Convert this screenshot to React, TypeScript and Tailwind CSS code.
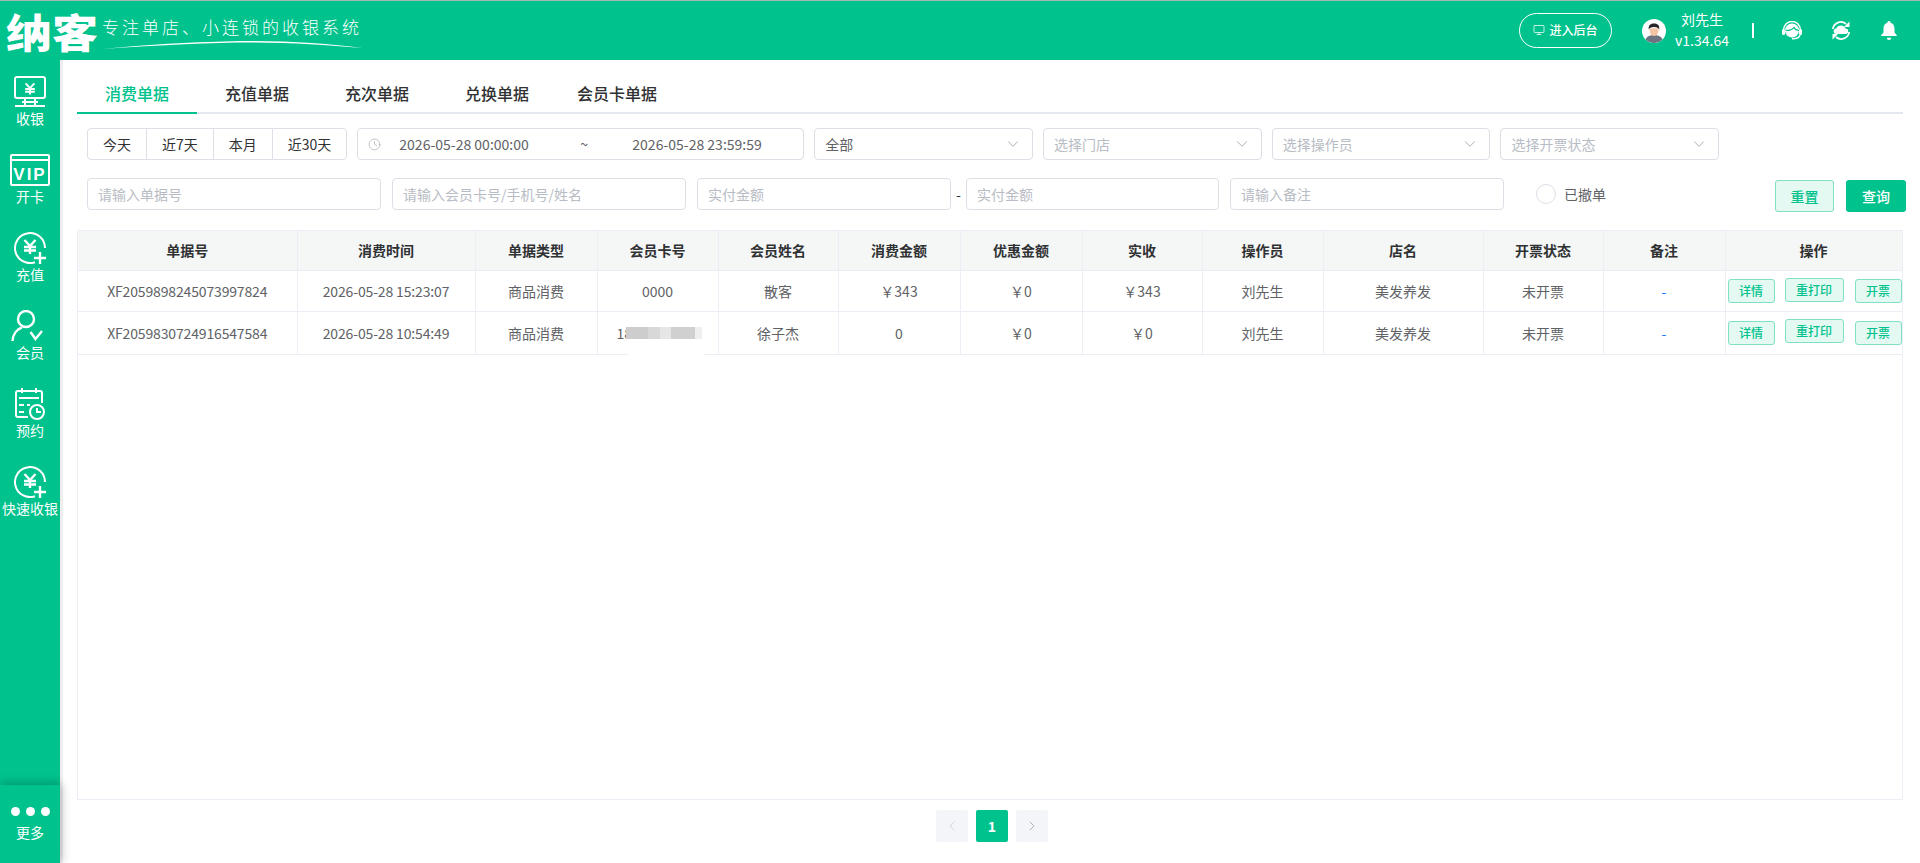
import { ChevronDown, ChevronLeft, ChevronRight, Clock, Monitor } from "lucide-react";

const font = "font-['Noto_Sans_CJK_SC','Noto_Sans',sans-serif]";

function YenMark({ x, y, s = 1 }: { x: number; y: number; s?: number }) {
  return (
    <path
      transform={`translate(${x} ${y}) scale(${s})`}
      d="M-5.500 -7L0 -1L5.500 -7M0 -1V7M-6 0H6M-6 3.500H6"
      fill="none"
      stroke="white"
      strokeWidth="2.400"
    />
  );
}

function CashIcon() {
  return (
    <svg width="60" height="32" viewBox="0 0 60 32" fill="none" stroke="white" strokeWidth="2">
      <rect x="15" y="1" width="30" height="21" rx="2" />
      <path d="M25 22v7M35 22v7M22 26h16M15 30h30" />
      <YenMark x={30} y={13} s={0.8} />
    </svg>
  );
}

function VipIcon() {
  return (
    <svg width="60" height="32" viewBox="0 0 60 32" fill="none" stroke="white" strokeWidth="2">
      <rect x="11" y="1" width="38" height="30" rx="1" />
      <path d="M11 6h38" />
      <text
        x="30"
        y="26"
        textAnchor="middle"
        fill="white"
        stroke="none"
        fontFamily="Liberation Sans"
        fontWeight="700"
        fontSize="17"
        letterSpacing="2"
      >
        VIP
      </text>
    </svg>
  );
}

function TopUpIcon() {
  return (
    <svg width="60" height="32" viewBox="0 0 60 32" fill="none" stroke="white" strokeWidth="2">
      <path d="M35 30.200A15 15 0 1 1 45 16" />
      <YenMark x={30} y={15} />
      <path d="M40 20v12M34 26h12" strokeWidth="2.400" />
    </svg>
  );
}

function MemberIcon() {
  return (
    <svg width="60" height="32" viewBox="0 0 60 32" fill="none" stroke="white" strokeWidth="2.400">
      <circle cx="26" cy="9" r="8" />
      <path d="M12.500 31C13 24 17 19 22 17.500M30.500 22l5 7l6.500 -8" />
    </svg>
  );
}

function BookingIcon() {
  return (
    <svg width="60" height="32" viewBox="0 0 60 32" fill="none" stroke="white" strokeWidth="2">
      <path d="M28 29H18a2 2 0 0 1 -2 -2V5a2 2 0 0 1 2 -2h22a2 2 0 0 1 2 2v10" />
      <path d="M22 0v5M36 0v5M19 10h20M19 17h5M19 24h5M27 17h3" />
      <circle cx="37" cy="24" r="7" />
      <path d="M37 20v4h4" />
    </svg>
  );
}

function SupportIcon() {
  return (
    <svg width="20" height="19" viewBox="0 0 20 19">
      <path d="M1.500 11V9a8.500 8.500 0 0 1 17 0v2" fill="none" stroke="white" strokeWidth="1.500" />
      <circle cx="10" cy="9.500" r="7" fill="white" />
      <path d="M3.500 9C6 10 10 9 12 6.500C13 8.500 15 9.500 17 9.500" fill="none" stroke="#00c28c" strokeWidth="1.200" />
      <rect x="0" y="8" width="3" height="6" rx="1.500" fill="white" />
      <rect x="17" y="8" width="3" height="6" rx="1.500" fill="white" />
      <path d="M18 14c-1 3 -4 4 -8 3.800" fill="none" stroke="white" strokeWidth="1.500" />
    </svg>
  );
}

function SyncIcon() {
  return (
    <svg width="20" height="19" viewBox="0 0 20 19">
      <path d="M1.800 8A8 8 0 0 1 15 3M18.200 11A8 8 0 0 1 5 16" fill="none" stroke="white" strokeWidth="1.800" />
      <path d="M18.500 0.500v5.500h-5.500zM1.500 18.500v-5.500h5.500z" fill="white" />
      <path d="M5.500 13a2.700 2.700 0 0 1 -0.300 -5.400a5 5 0 0 1 9.300 0a2.700 2.700 0 0 1 0 5.400z" fill="white" />
    </svg>
  );
}

function BellIcon() {
  return (
    <svg width="16" height="19" viewBox="0 0 16 19" fill="white">
      <path d="M8 0a1.500 1.500 0 0 1 1.500 1.700c2.600 0.700 4 3 4 5.800v4l2.200 2.500v1H0.300v-1l2.200 -2.500v-4c0 -2.800 1.400 -5.100 4 -5.800A1.500 1.500 0 0 1 8 0z" />
      <path d="M5.800 16.800h4.400a2.200 2.200 0 0 1 -4.400 0z" />
    </svg>
  );
}

function Avatar() {
  return (
    <svg width="24" height="24" viewBox="0 0 24 24">
      <circle cx="12" cy="12" r="12" fill="white" />
      <path d="M3.500 20.500c1.500 -3.500 5 -4.500 8.500 -4.500s7 1 8.500 4.500A12 12 0 0 1 3.500 20.500z" fill="#6b7280" />
      <path d="M7.500 10c0 -1 9 -1 9 0c0 4 -1.500 7 -4.500 7s-4.500 -3 -4.500 -7z" fill="#f2c4a4" />
      <path d="M6.800 10.500C6 6 9 4.500 12 4.500s6 1.500 5.200 6c-0.800 -1.500 -2 -2.500 -5.200 -2.500s-4.400 1 -5.200 2.500z" fill="#27272a" />
    </svg>
  );
}

function ActionButton({ label, className }: { label: string; className: string }) {
  return (
    <button
      className={`h-6 rounded-[3px] border border-[#7fe0c5] bg-[#e5f9f3] text-xs font-medium text-[#00c28c] ${className}`}
    >
      {label}
    </button>
  );
}

const navItems = [
  { label: "收银", icon: <CashIcon /> },
  { label: "开卡", icon: <VipIcon /> },
  { label: "充值", icon: <TopUpIcon /> },
  { label: "会员", icon: <MemberIcon /> },
  { label: "预约", icon: <BookingIcon /> },
  { label: "快速收银", icon: <TopUpIcon /> },
];

const tabs = ["消费单据", "充值单据", "充次单据", "兑换单据", "会员卡单据"];
const ranges = ["今天", "近7天", "本月", "近30天"];
const selects = [
  { label: "全部", filled: true },
  { label: "选择门店" },
  { label: "选择操作员" },
  { label: "选择开票状态" },
];
const columns = [
  ["单据号", "w-[219px]"],
  ["消费时间", "w-[178px]"],
  ["单据类型", "w-[122px]"],
  ["会员卡号", "w-[121px]"],
  ["会员姓名", "w-[120px]"],
  ["消费金额", "w-[122px]"],
  ["优惠金额", "w-[122px]"],
  ["实收", "w-[120px]"],
  ["操作员", "w-[121px]"],
  ["店名", "w-[160px]"],
  ["开票状态", "w-[120px]"],
  ["备注", "w-[122px]"],
  ["操作", "w-[177px]"],
];
const rows = [
  {
    no: "XF2059898245073997824",
    time: "2026-05-28 15:23:07",
    card: "0000",
    name: "散客",
    amount: "￥343",
    paid: "￥343",
    height: "h-[41px]",
    lift: "mb-[2px]",
  },
  {
    no: "XF2059830724916547584",
    time: "2026-05-28 10:54:49",
    card: "18",
    name: "徐子杰",
    amount: "0",
    paid: "￥0",
    height: "h-[43px]",
    lift: "mb-[4px]",
  },
];

const cell = "border-r border-b border-[#ebeef5] p-0 text-center";
const inputClass =
  "h-8 rounded-[4px] border border-[#dcdfe6] px-[10px] text-sm outline-none placeholder:text-[#b8bcc4]";

export default function App() {
  return (
    <div className={`flex h-screen flex-col overflow-hidden bg-white ${font}`}>
      <header className="flex h-[60px] shrink-0 items-center border-t border-[#a9b5b0] bg-[#00c28c] text-white">
        <div className="relative flex h-full w-[400px] items-center">
          <span className="ml-[6px] w-[96px] origin-left scale-x-[1.15] text-[40px] leading-[56px] font-black whitespace-nowrap">
            纳客
          </span>
          <span className="mb-[8px] text-[17px] font-light tracking-[3px] whitespace-nowrap">
            专注单店、小连锁的收银系统
          </span>
          <svg className="absolute top-[39px] left-[102px]" width="260" height="10" viewBox="0 0 260 10">
            <path d="M0 9C60 3 120 1 150 1C190 1 230 4 260 8C225 5 190 2.500 150 2.500C110 2.500 60 5 0 9z" fill="white" />
          </svg>
        </div>
        <div className="ml-auto flex items-center">
          <button className="flex h-[35px] w-[93px] items-center justify-center gap-1 rounded-full border border-white pb-[1px] text-xs font-medium">
            <Monitor size={12} strokeWidth={1.5} />
            进入后台
          </button>
          <div className="ml-[30px]">
            <Avatar />
          </div>
          <div className="mb-[2px] ml-[11px] flex w-[50px] flex-col items-center text-sm leading-[21px]">
            <span>刘先生</span>
            <span>v1.34.64</span>
          </div>
          <div className="ml-[25px] h-[15px] w-[2px] bg-white" />
          <div className="ml-[28px]">
            <SupportIcon />
          </div>
          <div className="ml-[29px]">
            <SyncIcon />
          </div>
          <div className="mr-[23px] ml-[30px]">
            <BellIcon />
          </div>
        </div>
      </header>

      <div className="flex min-h-0 flex-1">
        <aside className="relative flex w-[60px] shrink-0 flex-col bg-[#00c28c] pt-4 text-white">
          {navItems.map((item) => (
            <div key={item.label} className="flex h-[78px] flex-col items-center">
              {item.icon}
              <span className="text-sm leading-[20px] whitespace-nowrap">{item.label}</span>
            </div>
          ))}
          <div className="absolute right-0 bottom-0 left-0 flex h-[78px] flex-col items-center bg-[#00c28c] pt-[22px] shadow-[0_-4px_8px_rgba(0,0,0,0.12),4px_0_8px_rgba(0,0,0,0.12)]">
            <div className="flex gap-[6px]">
              <span className="size-[9px] rounded-full bg-white" />
              <span className="size-[9px] rounded-full bg-white" />
              <span className="size-[9px] rounded-full bg-white" />
            </div>
            <span className="mt-[5px] text-sm leading-[22px]">更多</span>
          </div>
        </aside>

        <main className="flex min-w-0 flex-1 flex-col border-l-[3px] border-[#eeeeee] pr-[17px] pl-[14px]">
          <nav className="flex h-[54px] shrink-0 border-b-2 border-[#e4e7ed]">
            {tabs.map((tab, i) => (
              <div
                key={tab}
                className={
                  i === 0
                    ? "-mb-[2px] flex w-[120px] items-center justify-center border-b-2 border-[#00c28c] pt-[14px] text-base font-medium text-[#00c28c]"
                    : "flex w-[120px] items-center justify-center pt-[14px] text-base font-medium text-[#303133]"
                }
              >
                {tab}
              </div>
            ))}
          </nav>

          <div className="mt-[14px] flex gap-[10px] pl-[10px] text-sm text-[#606266]">
            <div className="flex h-8 overflow-hidden rounded-[4px] border border-[#dcdfe6] text-[#303133]">
              {ranges.map((range, i) => (
                <span
                  key={range}
                  className={
                    i === 0
                      ? "flex items-center px-[15px]"
                      : "flex items-center border-l border-[#dcdfe6] px-[15px]"
                  }
                >
                  {range}
                </span>
              ))}
            </div>
            <div className="flex h-8 w-[447px] items-center rounded-[4px] border border-[#dcdfe6] pl-[10px]">
              <Clock size={13} strokeWidth={1} className="text-[#909399]" />
              <span className="ml-[18px] w-[181px]">2026-05-28 00:00:00</span>
              <span className="w-[52px]">~</span>
              <span>2026-05-28 23:59:59</span>
            </div>
            {selects.map((select) => (
              <div
                key={select.label}
                className="flex h-8 w-[218.700px] items-center justify-between rounded-[4px] border border-[#dcdfe6] pr-[10px] pl-[10px]"
              >
                <span className={select.filled ? "text-[#606266]" : "text-[#b8bcc4]"}>{select.label}</span>
                <ChevronDown size={18} strokeWidth={1} className="text-[#909399]" />
              </div>
            ))}
          </div>

          <div className="mt-[18px] mr-[-3px] flex items-start pl-[10px] text-sm">
            <input className={`${inputClass} w-[294px]`} placeholder="请输入单据号" readOnly />
            <input className={`${inputClass} ml-[11px] w-[294px]`} placeholder="请输入会员卡号/手机号/姓名" readOnly />
            <input className={`${inputClass} ml-[11px] w-[254px]`} placeholder="实付金额" readOnly />
            <span className="flex h-8 w-[15px] items-center justify-center text-[#303133]">-</span>
            <input className={`${inputClass} w-[253px]`} placeholder="实付金额" readOnly />
            <input className={`${inputClass} ml-[11px] w-[274px]`} placeholder="请输入备注" readOnly />
            <div className="ml-[32px] flex h-8 items-center text-[#606266]">
              <span className="size-5 rounded-full border border-[#dcdfe6]" />
              <span className="ml-[8px]">已撤单</span>
            </div>
            <button className="mt-[2px] ml-auto h-8 w-[59px] rounded-[3px] border border-[#7fe0c5] bg-[#e5f9f3] font-medium text-[#00c28c]">
              重置
            </button>
            <button className="mt-[2px] ml-3 h-8 w-[60px] rounded-[3px] bg-[#00c28c] font-medium text-white">
              查询
            </button>
          </div>

          <div className="mt-[18px] min-h-0 flex-1 border border-[#ebeef5]">
            <table className="w-full table-fixed border-collapse text-sm text-[#606266]">
              <colgroup>
                {columns.map(([label, width]) => (
                  <col key={label} className={width} />
                ))}
              </colgroup>
              <thead>
                <tr className="h-[39px] bg-[#f5f7f7] text-[#303133]">
                  {columns.map(([label]) => (
                    <th key={label} className={`${cell} font-bold`}>
                      {label}
                    </th>
                  ))}
                </tr>
              </thead>
              <tbody>
                {rows.map((row) => (
                  <tr key={row.no} className={row.height}>
                    <td className={`${cell} tracking-[-0.150px]`}>{row.no}</td>
                    <td className={`${cell} tracking-[-0.150px]`}>{row.time}</td>
                    <td className={cell}>商品消费</td>
                    <td className={`${cell} relative`}>
                      {row.card === "18" ? (
                        <div className="flex items-center pl-[19px]">
                          <span>18</span>
                          <div className="ml-[-6px] flex h-3">
                            <span className="w-[22px] bg-[#cdcdcd]" />
                            <span className="w-[12px] bg-[#d8d8d8]" />
                            <span className="w-[11px] bg-[#e6e6e6]" />
                            <span className="w-[24px] bg-[#d0d0d0]" />
                            <span className="w-[7px] bg-[#efefef]" />
                          </div>
                          <span className="absolute -bottom-[2px] left-[30px] h-[4px] w-[76px] bg-white" />
                        </div>
                      ) : (
                        row.card
                      )}
                    </td>
                    <td className={cell}>{row.name}</td>
                    <td className={cell}>{row.amount}</td>
                    <td className={cell}>￥0</td>
                    <td className={cell}>{row.paid}</td>
                    <td className={cell}>刘先生</td>
                    <td className={cell}>美发养发</td>
                    <td className={cell}>未开票</td>
                    <td className={`${cell} text-[#1677ff]`}>-</td>
                    <td className={cell}>
                      <div className="flex items-center pl-[2px]">
                        <ActionButton label="详情" className="w-[47px]" />
                        <ActionButton label="重打印" className={`ml-[10px] w-[59px] ${row.lift}`} />
                        <ActionButton label="开票" className="ml-[11px] w-[47px]" />
                      </div>
                    </td>
                  </tr>
                ))}
              </tbody>
            </table>
          </div>

          <div className="mt-[10px] mb-[21px] flex h-8 shrink-0 justify-center gap-2 pl-[4px]">
            <span className="flex w-8 items-center justify-center rounded-[2px] bg-[#f4f5f9] text-[#c0c4cc]">
              <ChevronLeft size={16} strokeWidth={1} />
            </span>
            <span className="flex w-8 items-center justify-center rounded-[2px] bg-[#00c28c] text-sm font-bold text-white">
              1
            </span>
            <span className="flex w-8 items-center justify-center rounded-[2px] bg-[#f4f5f9] text-[#909399]">
              <ChevronRight size={16} strokeWidth={1} />
            </span>
          </div>
        </main>
      </div>
    </div>
  );
}
